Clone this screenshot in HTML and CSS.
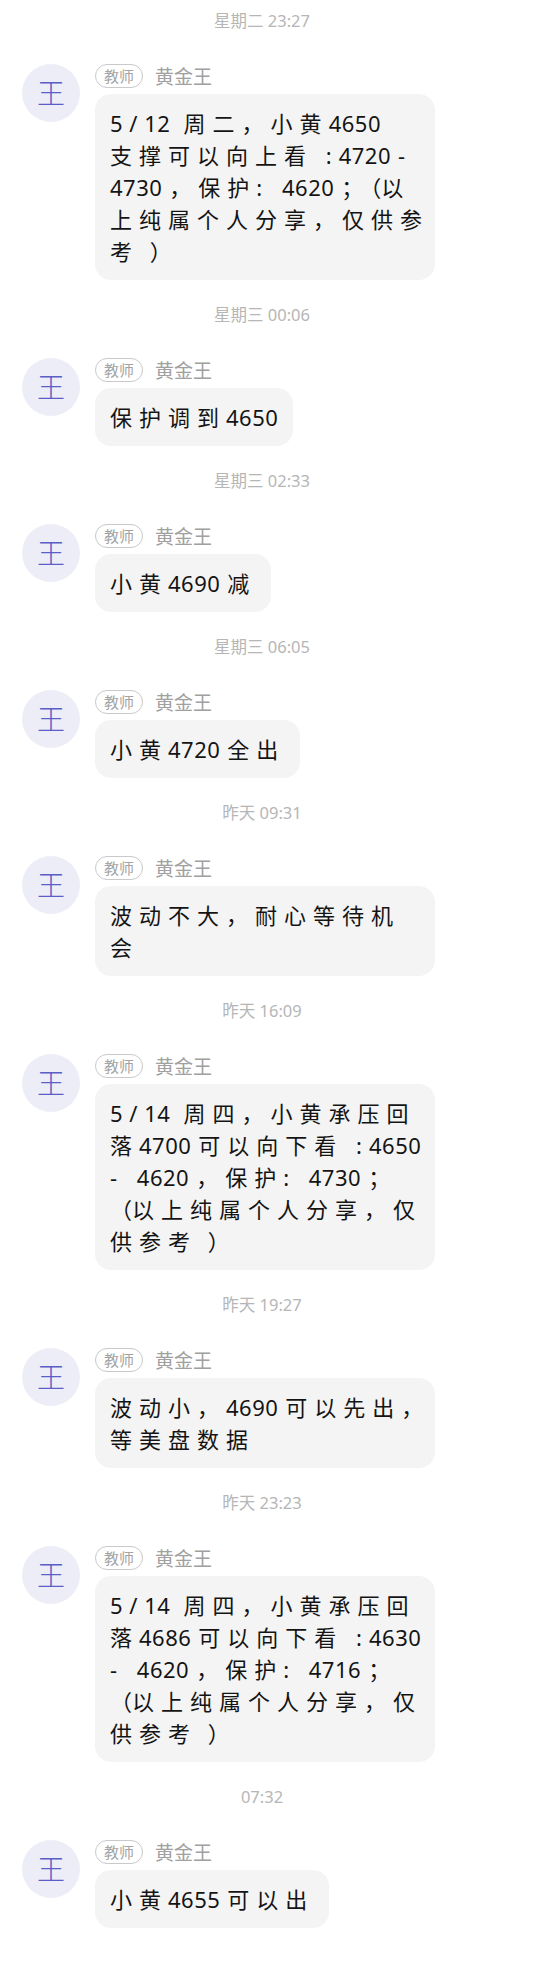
FILE: index.html
```html
<!DOCTYPE html>
<html lang="zh-CN">
<head>
  <meta charset="UTF-8" />
  <meta name="viewport" content="width=device-width, initial-scale=1.0"/>
  <title>黄金王</title>
  <link rel="stylesheet" href="styles.css">
</head>
<body>

  <div class="chat">

    <div class="time">星期二 23:27</div>
    <div class="msg">
      <div class="avatar">王</div>
      <div class="body">
        <div class="meta"><span class="tag">教师</span><span class="name">黄金王</span></div>
        <div class="bubble full"><span class="n">5 / 12 </span>周二，小黄<span class="n">4650</span><br>支撑可以向上看 :<span class="n">4720</span>-<br><span class="n">4730</span>，保护: <span class="n">4620</span>；<span class="p">（</span>以<br>上纯属个人分享，仅供参<br>考&thinsp;）</div>
      </div>
    </div>

    <div class="time">星期三 00:06</div>
    <div class="msg">
      <div class="avatar">王</div>
      <div class="body">
        <div class="meta"><span class="tag">教师</span><span class="name">黄金王</span></div>
        <div class="bubble">保护调到<span class="n last">4650</span></div>
      </div>
    </div>

    <div class="time">星期三 02:33</div>
    <div class="msg">
      <div class="avatar">王</div>
      <div class="body">
        <div class="meta"><span class="tag">教师</span><span class="name">黄金王</span></div>
        <div class="bubble">小黄<span class="n">4690</span>减</div>
      </div>
    </div>

    <div class="time">星期三 06:05</div>
    <div class="msg">
      <div class="avatar">王</div>
      <div class="body">
        <div class="meta"><span class="tag">教师</span><span class="name">黄金王</span></div>
        <div class="bubble">小黄<span class="n">4720</span>全出</div>
      </div>
    </div>

    <div class="time">昨天 09:31</div>
    <div class="msg">
      <div class="avatar">王</div>
      <div class="body">
        <div class="meta"><span class="tag">教师</span><span class="name">黄金王</span></div>
        <div class="bubble full">波动不大，耐心等待机<br>会</div>
      </div>
    </div>

    <div class="time">昨天 16:09</div>
    <div class="msg">
      <div class="avatar">王</div>
      <div class="body">
        <div class="meta"><span class="tag">教师</span><span class="name">黄金王</span></div>
        <div class="bubble full"><span class="n">5 / 14 </span>周四，小黄承压回<br>落<span class="n">4700</span>可以向下看 :<span class="n">4650</span><br>- <span class="n">4620</span>，保护: <span class="n">4730</span>；<br><span class="p">（</span>以上纯属个人分享，仅<br>供参考&thinsp;）</div>
      </div>
    </div>

    <div class="time">昨天 19:27</div>
    <div class="msg">
      <div class="avatar">王</div>
      <div class="body">
        <div class="meta"><span class="tag">教师</span><span class="name">黄金王</span></div>
        <div class="bubble full">波动小，<span class="n">4690</span>可以先出，<br>等美盘数据</div>
      </div>
    </div>

    <div class="time">昨天 23:23</div>
    <div class="msg">
      <div class="avatar">王</div>
      <div class="body">
        <div class="meta"><span class="tag">教师</span><span class="name">黄金王</span></div>
        <div class="bubble full"><span class="n">5 / 14 </span>周四，小黄承压回<br>落<span class="n">4686</span>可以向下看 :<span class="n">4630</span><br>- <span class="n">4620</span>，保护: <span class="n">4716</span>；<br><span class="p">（</span>以上纯属个人分享，仅<br>供参考&thinsp;）</div>
      </div>
    </div>

    <div class="time">07:32</div>
    <div class="msg">
      <div class="avatar">王</div>
      <div class="body">
        <div class="meta"><span class="tag">教师</span><span class="name">黄金王</span></div>
        <div class="bubble">小黄<span class="n">4655</span>可以出</div>
      </div>
    </div>

  </div>

</body>
</html>
```

FILE: styles.css
```css
body {
  margin: 0;
  background: #ffffff;
  font-family: "Noto Sans", "Noto Sans CJK SC", sans-serif;
  color: #141414;
}

.chat {
  padding: 10px 0 30px;
}

.time {
  margin: 24px 0 32px;
  padding-right: 16px;
  text-align: center;
  font-size: 16.5px;
  line-height: 22px;
  color: #b6b6b6;
}

.time:first-child {
  margin-top: 0;
}

.msg {
  display: flex;
  align-items: flex-start;
  gap: 15px;
  padding-left: 22px;
}

.avatar {
  flex: none;
  width: 58px;
  height: 58px;
  border-radius: 50%;
  background: #ededf7;
  color: #5a5ec6;
  font-size: 28px;
  font-weight: 300;
  line-height: 58px;
  text-align: center;
}

.body {
  display: flex;
  flex-direction: column;
  align-items: flex-start;
}

.meta {
  display: flex;
  align-items: center;
  height: 24px;
  margin-bottom: 6px;
}

.tag {
  box-sizing: border-box;
  height: 24px;
  padding: 0 8px;
  border: 1px solid #c9c9c9;
  border-radius: 12px;
  font-size: 15px;
  line-height: 22px;
  color: #a3a3a3;
}

.name {
  margin-left: 12px;
  font-size: 19px;
  color: #a0a0a0;
}

.bubble {
  box-sizing: border-box;
  max-width: 340px;
  padding: 13px 15px;
  border-radius: 16px;
  background: #f4f4f4;
  font-size: 22px;
  line-height: 32px;
  letter-spacing: 7px;
  white-space: nowrap;
}

.bubble.full {
  width: 340px;
}

.n {
  letter-spacing: 0.5px;
  margin-right: 7px;
}

.n.last {
  margin-right: 0;
}

.p {
  letter-spacing: 0;
}
```
